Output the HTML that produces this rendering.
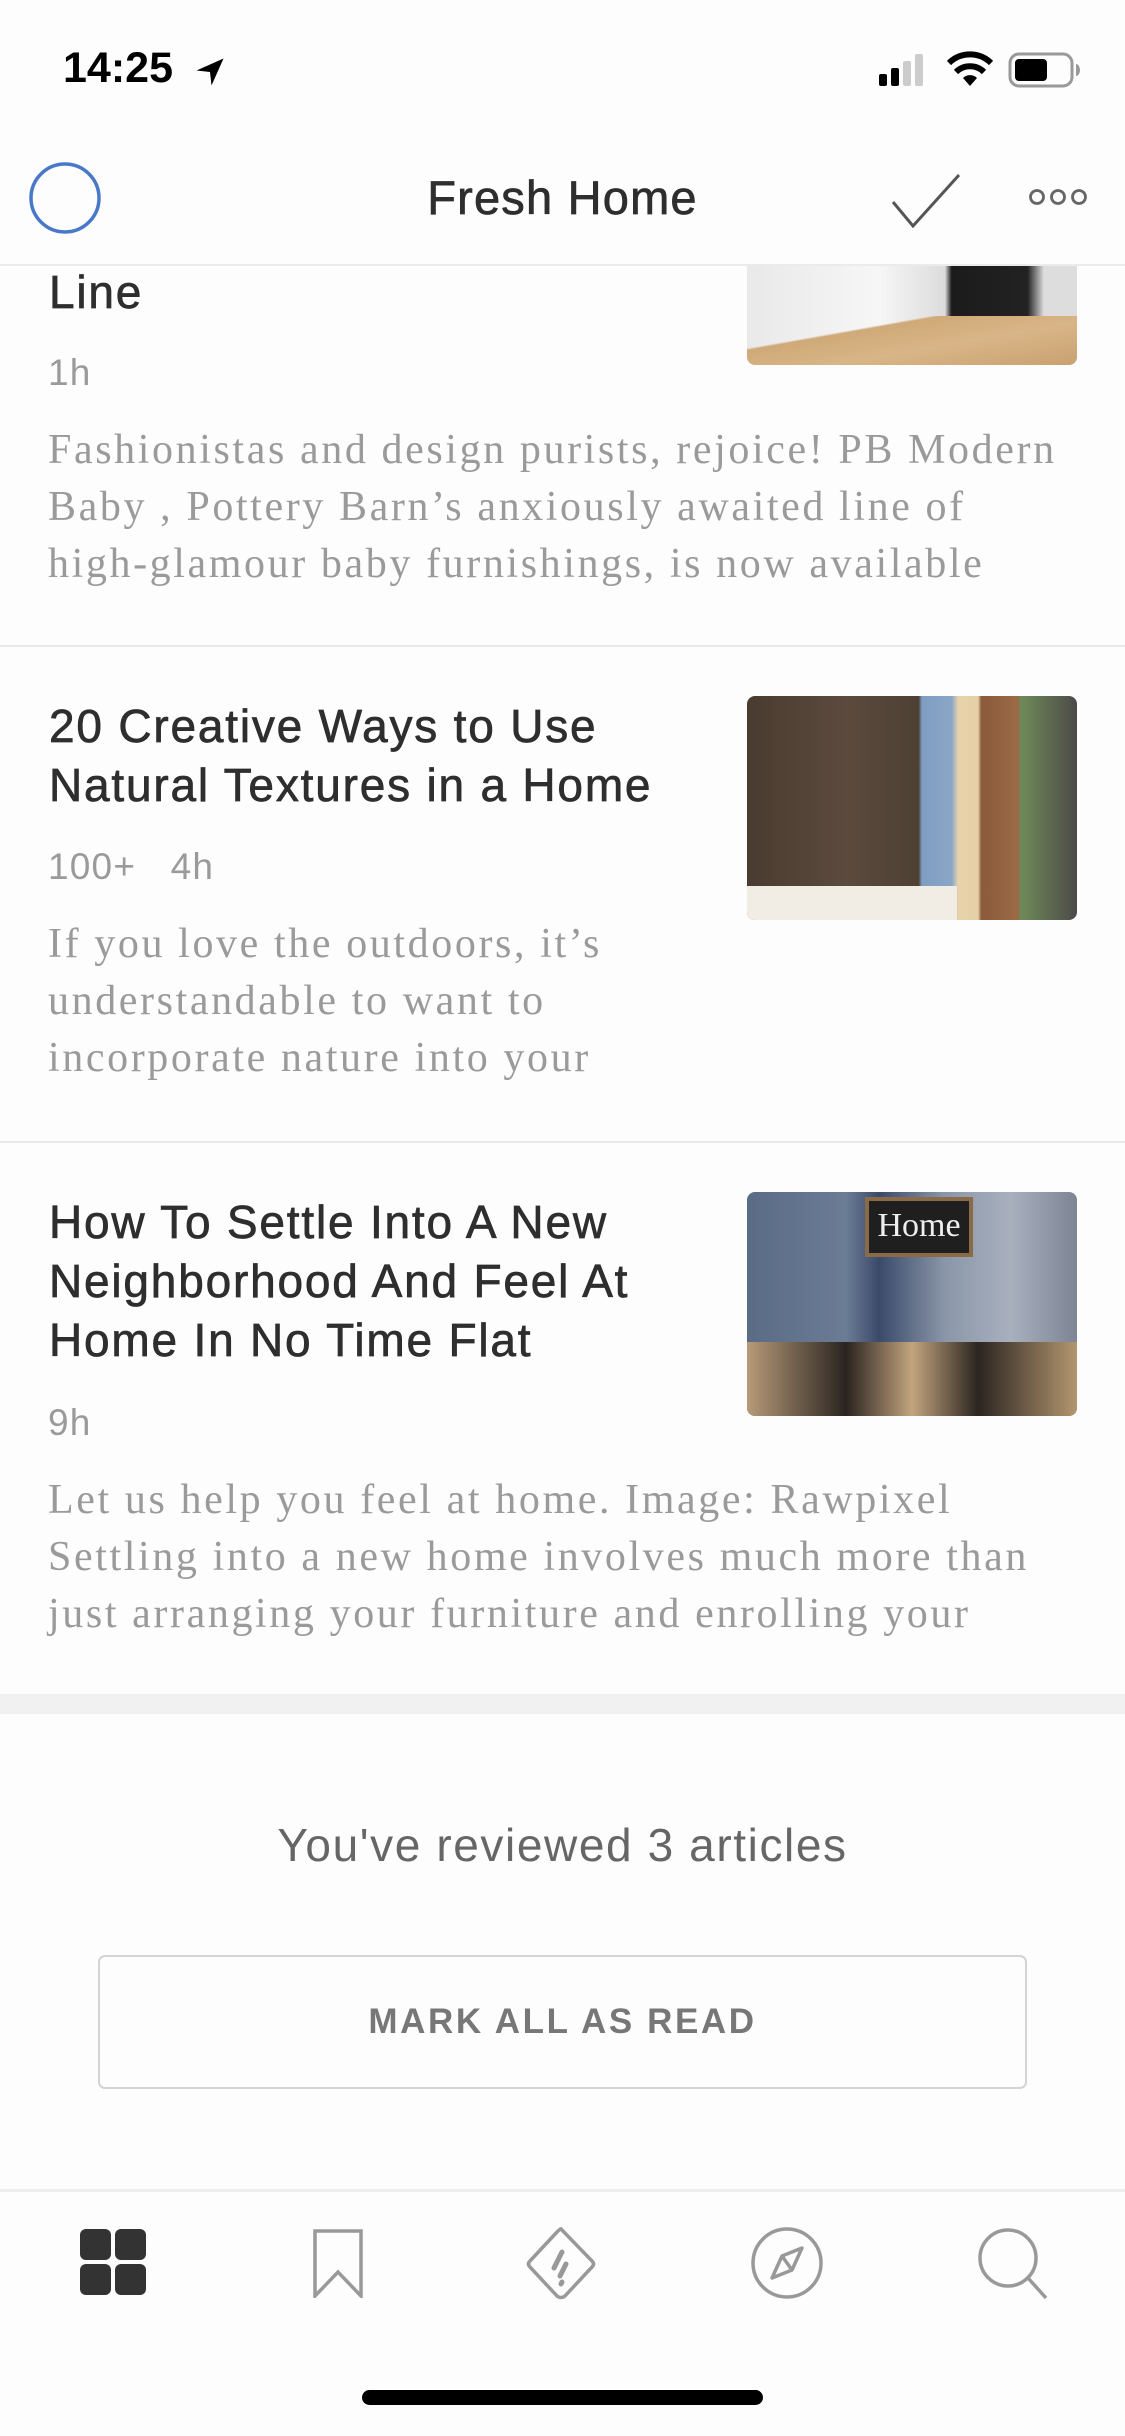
<!DOCTYPE html>
<html><head><meta charset="utf-8"><style>
*{margin:0;padding:0;box-sizing:border-box}
body{width:1125px;height:2436px;background:#fdfdfd;position:relative;overflow:hidden;font-family:"Liberation Sans",sans-serif;color:#333}
.a{position:absolute;white-space:nowrap}
.t{font-size:46px;letter-spacing:1.8px;color:#2e2e2e;-webkit-text-stroke:0.7px #2e2e2e;line-height:59px;left:49px}
.m{font-size:37px;letter-spacing:1.2px;color:#9a9a9a;left:48px}
.d{font-family:"Liberation Serif",serif;font-size:42px;letter-spacing:2.6px;color:#9a9a9a;line-height:57px;left:48px}
.hr{position:absolute;left:0;width:1125px;height:2px;background:#e8e8e8}
.img{position:absolute;left:747px;width:330px;height:224px;border-radius:8px;overflow:hidden}
</style></head><body>

<!-- Article 1 (partially under nav) -->
<div class="img" style="top:141px;background:linear-gradient(90deg,#e9e9e9 0%,#f6f6f6 40%,#dcdcdc 60%,#1b1b1b 62%,#222 85%,#ddd 90%)">
  <div style="position:absolute;left:0;top:175px;width:330px;height:49px;background:linear-gradient(170deg,transparent 0 30%,#cfa978 32%,#d8b587 60%,#c9a171 100%)"></div>
</div>
<div class="a t" style="top:263px">Line</div>
<div class="a m" style="top:352px">1h</div>
<div class="a d" style="top:422px">Fashionistas and design purists, rejoice! PB Modern<br>Baby , Pottery Barn’s anxiously awaited line of<br>high-glamour baby furnishings, is now available</div>
<div class="hr" style="top:645px"></div>

<!-- Article 2 -->
<div class="img" style="top:696px;background:linear-gradient(90deg,#4a3b30 0%,#5b4a3d 30%,#4e4034 52%,#7f9ec2 53%,#8aa6c6 62%,#e8d3ad 64%,#e6cfa6 70%,#8a5a3a 71%,#9b6a46 82%,#6f8a5a 83%,#4b4a48 100%)">
  <div style="position:absolute;left:0;top:190px;width:210px;height:34px;background:#f1ece4"></div>
</div>
<div class="a t" style="top:697px">20 Creative Ways to Use<br>Natural Textures in a Home</div>
<div class="a m" style="top:846px">100+&nbsp;&nbsp;&nbsp;4h</div>
<div class="a d" style="top:916px">If you love the outdoors, it’s<br>understandable to want to<br>incorporate nature into your</div>
<div class="hr" style="top:1141px"></div>

<!-- Article 3 -->
<div class="img" style="top:1192px;background:linear-gradient(90deg,#5a6b86 0%,#6b7c95 30%,#3a4a6a 40%,#8a96a8 60%,#a8b0be 80%,#7d8595 100%)">
  <div style="position:absolute;left:0;top:150px;width:330px;height:74px;background:linear-gradient(90deg,#b79a78,#2a2420 30%,#c3a47f 50%,#2b2520 70%,#b3966f)"></div>
  <div style="position:absolute;left:118px;top:5px;width:108px;height:60px;background:#1f1f1f;border:4px solid #8b6b47;color:#eee;font-family:'Liberation Serif',serif;font-size:34px;text-align:center;line-height:50px">Home</div>
</div>
<div class="a t" style="top:1193px">How To Settle Into A New<br>Neighborhood And Feel At<br>Home In No Time Flat</div>
<div class="a m" style="top:1402px">9h</div>
<div class="a d" style="top:1472px">Let us help you feel at home. Image: Rawpixel<br>Settling into a new home involves much more than<br>just arranging your furniture and enrolling your</div>

<div style="position:absolute;left:0;top:1694px;width:1125px;height:20px;background:#f1f1f1"></div>

<div class="a" style="left:0;width:1125px;text-align:center;top:1818px;font-size:46px;letter-spacing:1.6px;color:#666">You've reviewed 3 articles</div>
<div style="position:absolute;left:98px;top:1955px;width:929px;height:134px;border:2px solid #d4d4d4;border-radius:7px;text-align:center;line-height:130px;font-size:35px;font-weight:bold;color:#777;letter-spacing:2.6px">MARK ALL AS READ</div>

<!-- Nav -->
<div style="position:absolute;left:0;top:0;width:1125px;height:265px;background:#fdfdfd"></div>
<div class="hr" style="top:264px;background:#ebebeb"></div>
<div class="a" style="left:63px;top:44px;font-size:43px;font-weight:bold;color:#000;letter-spacing:0px">14:25</div>
<svg class="a" style="left:192px;top:54px" width="36" height="36" viewBox="0 0 24 24"><path d="M21 3 L3 11 L12 12 L13 21 Z" fill="#000"/></svg>
<svg class="a" style="left:878px;top:52px" width="60" height="34" viewBox="0 0 60 34"><rect x="1" y="22" width="8" height="12" rx="2" fill="#000"/><rect x="13" y="16" width="8" height="18" rx="2" fill="#000"/><rect x="25" y="9" width="8" height="25" rx="2" fill="#ccc"/><rect x="37" y="2" width="8" height="32" rx="2" fill="#ccc"/></svg>
<svg class="a" style="left:946px;top:50px" width="48" height="38" viewBox="0 0 48 38"><path d="M24 36 L31 28 A10 10 0 0 0 17 28 Z" fill="#000"/><path d="M10 22 A20 20 0 0 1 38 22" stroke="#000" stroke-width="6" fill="none"/><path d="M3 13 A30 30 0 0 1 45 13" stroke="#000" stroke-width="6" fill="none"/></svg>
<svg class="a" style="left:1008px;top:52px" width="74" height="36" viewBox="0 0 74 36"><rect x="2" y="2" width="62" height="32" rx="9" stroke="#999" stroke-width="3" fill="none"/><rect x="7" y="7" width="32" height="22" rx="4" fill="#000"/><path d="M68 12 a4 6 0 0 1 0 12z" fill="#999"/></svg>

<svg class="a" style="left:27px;top:160px" width="76" height="76"><circle cx="38" cy="38" r="34" stroke="#4a78c8" stroke-width="3.5" fill="none"/></svg>
<div class="a" style="left:0;width:1125px;text-align:center;top:170px;font-size:47px;letter-spacing:1.2px;color:#2e2e2e;-webkit-text-stroke:0.7px #2e2e2e">Fresh Home</div>
<svg class="a" style="left:890px;top:172px" width="72" height="56" viewBox="0 0 72 56"><path d="M3 30 L23 54 L69 3" stroke="#555" stroke-width="3" fill="none"/></svg>
<svg class="a" style="left:1028px;top:186px" width="60" height="22" viewBox="0 0 60 22"><circle cx="9" cy="11" r="6.5" stroke="#666" stroke-width="2.8" fill="none"/><circle cx="30" cy="11" r="6.5" stroke="#666" stroke-width="2.8" fill="none"/><circle cx="51" cy="11" r="6.5" stroke="#666" stroke-width="2.8" fill="none"/></svg>

<!-- Tab bar -->
<div class="hr" style="top:2189px;height:3px;background:#eeeeee"></div>
<svg class="a" style="left:79px;top:2228px" width="68" height="68" viewBox="0 0 68 68"><rect x="1" y="1" width="31" height="31" rx="6" fill="#333"/><rect x="36" y="1" width="31" height="31" rx="6" fill="#333"/><rect x="1" y="36" width="31" height="31" rx="6" fill="#333"/><rect x="36" y="36" width="31" height="31" rx="6" fill="#333"/></svg>
<svg class="a" style="left:312px;top:2228px" width="52" height="70" viewBox="0 0 52 70"><path d="M3 68 V3 H49 V68 L26 44 Z" stroke="#999" stroke-width="3.5" fill="none" stroke-linejoin="miter"/></svg>
<svg class="a" style="left:524px;top:2226px" width="74" height="74" viewBox="0 0 74 74"><path d="M37 3 L68 35 Q71 38 68 41 L41 70 Q37 73 33 70 L6 41 Q3 38 6 35 L33 6 Q37 2 37 3Z" stroke="#999" stroke-width="3.5" fill="none"/><path d="M38 26 L30 42 M42 38 L36 50 M38 56 L37 58" stroke="#999" stroke-width="5" stroke-linecap="round"/></svg>
<svg class="a" style="left:750px;top:2226px" width="74" height="74" viewBox="0 0 74 74"><circle cx="37" cy="37" r="34" stroke="#999" stroke-width="3.5" fill="none"/><path d="M52 22 L42 44 L22 52 L32 30 Z M32 30 L42 44" stroke="#999" stroke-width="3.5" fill="none" stroke-linejoin="round"/></svg>
<svg class="a" style="left:976px;top:2226px" width="74" height="74" viewBox="0 0 74 74"><circle cx="32" cy="32" r="28" stroke="#999" stroke-width="3.5" fill="none"/><path d="M52 52 L70 72" stroke="#999" stroke-width="3.5"/></svg>

<div style="position:absolute;left:362px;top:2390px;width:401px;height:15px;border-radius:8px;background:#000"></div>
</body></html>
